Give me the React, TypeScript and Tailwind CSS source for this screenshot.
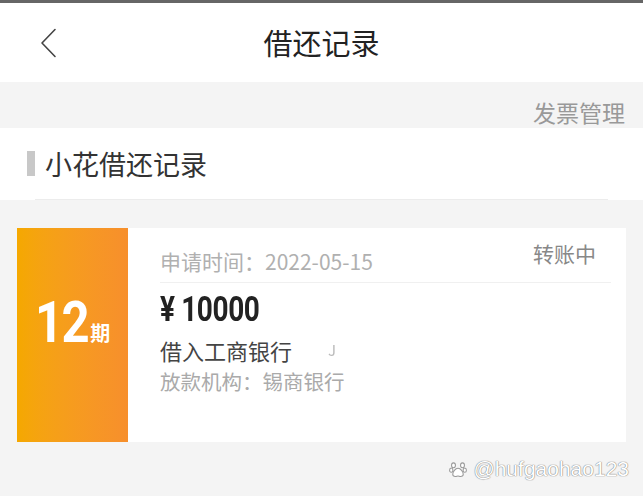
const cjk = "font-['Noto_Sans_CJK_SC','Noto_Sans',sans-serif]";

function BackArrow() {
  return (
    <svg width="18" height="30" viewBox="0 0 18 30" fill="none" stroke="#444" strokeWidth="1.6" strokeLinecap="round" strokeLinejoin="round">
      <polyline points="15,1.5 2,15 15,28.5" />
    </svg>
  );
}

function PawMark() {
  return (
    <svg width="18" height="18" viewBox="0 0 24 24" fill="white" stroke="#999" strokeWidth="1.4">
      <ellipse cx="6" cy="7" rx="2.6" ry="3.2" />
      <ellipse cx="18" cy="7" rx="2.6" ry="3.2" />
      <ellipse cx="3" cy="13.5" rx="2.2" ry="2.8" />
      <ellipse cx="21" cy="13.5" rx="2.2" ry="2.8" />
      <path d="M12 11c-3.5 0-7 5-7 8 0 2.2 2 3 3.5 3 1.5 0 2.3-.8 3.5-.8s2 .8 3.5.8c1.5 0 3.5-.8 3.5-3 0-3-3.5-8-7-8z" />
    </svg>
  );
}

function RecordCard() {
  return (
    <div className="mx-[17px] flex h-[214px] bg-white">
      {/* term badge */}
      <div className="flex w-[111px] items-center justify-center bg-gradient-to-r from-[#f5a800] to-[#f78f2c] pb-[26px]">
        <span className="mr-[-8px] inline-block origin-left scale-x-[0.86] font-['Roboto',sans-serif] text-[57px] font-bold leading-none tracking-[-2px] text-white">
          12
        </span>
        <span className="ml-[2px] mt-[22px] text-[20px] font-bold leading-none text-white">期</span>
      </div>

      <div className="flex-1 pl-[32px] pr-[15px] pt-[19px]">
        <div className="flex items-start justify-between">
          <span className="text-[21px] leading-[28px] text-[#b0b0b0]">申请时间：2022-05-15</span>
          <span className="-mt-[8px] mr-[15px] text-[21px] leading-[28px] text-[#888]">转账中</span>
        </div>
        <div className="mt-[7px] h-px bg-[#f0f0f0]" />
        <div className="mt-[9px] h-[36px] origin-left scale-x-[0.8] font-['Roboto',sans-serif] text-[35px] font-bold leading-[36px] tracking-[-0.5px] text-[#222]">
          ¥ 10000
        </div>
        <div className="mt-[7px] flex items-center text-[22px] leading-[30px] text-[#444]">
          <span>借入工商银行</span>
          <span className="ml-[36px] text-[15px] text-[#bbb] blur-[0.5px]">J</span>
        </div>
        <div className="mt-[2px] text-[20.5px] leading-[28px] text-[#aaa]">放款机构：锡商银行</div>
      </div>
    </div>
  );
}

export default function App() {
  return (
    <div className={`relative h-[496px] w-[643px] overflow-hidden bg-[#f4f4f4] ${cjk}`}>
      <div className="h-[3px] bg-[#666]" />

      <header className="relative flex h-[79px] items-center justify-center bg-white">
        <div className="absolute left-[40px] top-[25px]">
          <BackArrow />
        </div>
        <h1 className="text-[29px] leading-none text-[#222]">借还记录</h1>
      </header>

      <div className="flex h-[46px] justify-end pr-[18px] pt-[15px]">
        <span className="text-[23px] leading-[30px] text-[#999]">发票管理</span>
      </div>

      <section className="bg-white">
        <div className="flex h-[71px] items-center pl-[27px]">
          <div className="h-[25px] w-[8px] bg-[#c8c8c8]" />
          <span className="ml-[10px] text-[27px] leading-none text-[#333]">小花借还记录</span>
        </div>
        <div className="ml-[35px] mr-[35px] h-px bg-[#ececec]" />
      </section>

      <div className="h-[28px]" />
      <RecordCard />

      {/* account mark */}
      <div className="absolute bottom-[17px] right-[14px] flex items-center gap-[6px] text-white">
        <PawMark />
        <span className="font-['Liberation_Sans',sans-serif] text-[21px] leading-none [text-shadow:0_0_1px_#777,0_0_1px_#777]">
          @hufgaohao123
        </span>
      </div>
    </div>
  );
}
